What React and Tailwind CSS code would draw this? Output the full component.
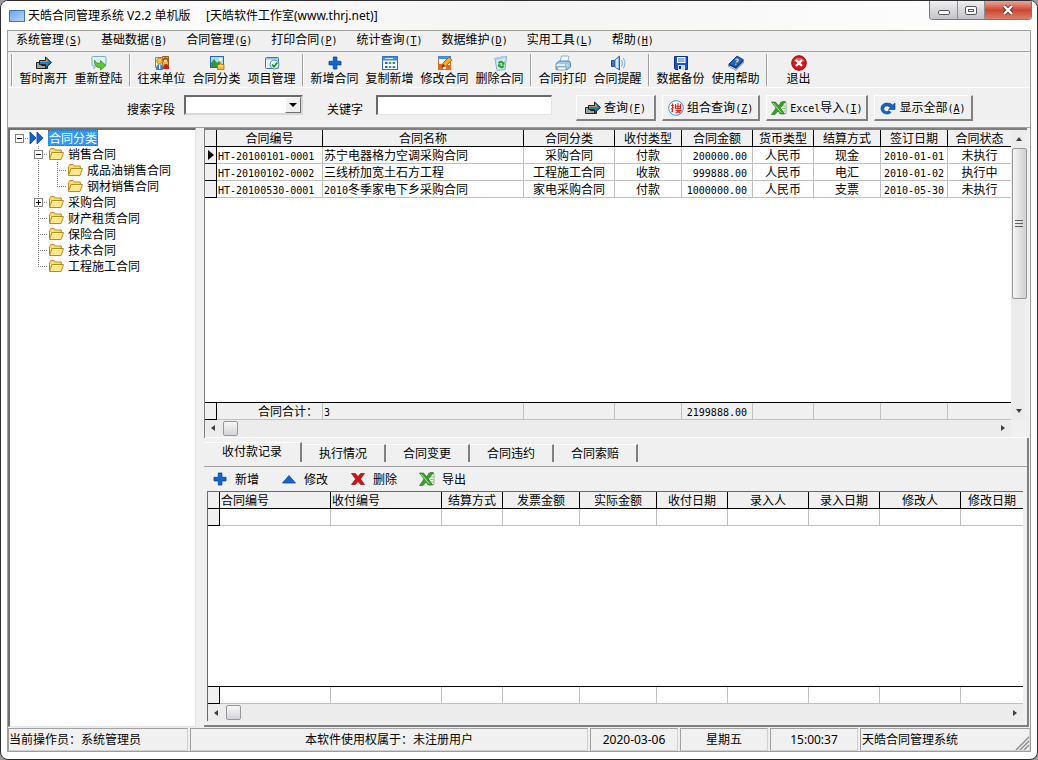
import { useState } from "react";
import clsx from "clsx";

const menus = [
  ["系统管理", "S"],
  ["基础数据", "B"],
  ["合同管理", "G"],
  ["打印合同", "P"],
  ["统计查询", "T"],
  ["数据维护", "D"],
  ["实用工具", "L"],
  ["帮助", "H"],
];

const toolGroups = [
  [["暂时离开", "leave"], ["重新登陆", "login"]],
  [["往来单位", "people"], ["合同分类", "category"], ["项目管理", "project"]],
  [["新增合同", "plus"], ["复制新增", "copy"], ["修改合同", "edit"], ["删除合同", "recycle"]],
  [["合同打印", "printer"], ["合同提醒", "speaker"]],
  [["数据备份", "disk"], ["使用帮助", "book"]],
  [["退出", "exit"]],
];

const tree = [
  { label: "合同分类", guides: ["root-"], icon: "forward" },
  { label: "销售合同", guides: ["blank", "tee-"], icon: "folder" },
  { label: "成品油销售合同", guides: ["blank", "pass", "tee"], icon: "folder" },
  { label: "钢材销售合同", guides: ["blank", "pass", "end"], icon: "folder" },
  { label: "采购合同", guides: ["blank", "tee+"], icon: "folder" },
  { label: "财产租赁合同", guides: ["blank", "tee"], icon: "folder" },
  { label: "保险合同", guides: ["blank", "tee"], icon: "folder" },
  { label: "技术合同", guides: ["blank", "tee"], icon: "folder" },
  { label: "工程施工合同", guides: ["blank", "end"], icon: "folder" },
];

const contractCols = [
  ["合同编号", "w-[106px]"],
  ["合同名称", "w-[201px]"],
  ["合同分类", "w-[91px]"],
  ["收付类型", "w-[67px]"],
  ["合同金额", "w-[71px]"],
  ["货币类型", "w-[61px]"],
  ["结算方式", "w-[67px]"],
  ["签订日期", "w-[67px]"],
  ["合同状态", ""],
];

const contracts = [
  ["HT-20100101-0001", "苏宁电器格力空调采购合同", "采购合同", "付款", "200000.00", "人民币", "现金", "2010-01-01", "未执行"],
  ["HT-20100102-0002", "三线桥加宽土石方工程", "工程施工合同", "收款", "999888.00", "人民币", "电汇", "2010-01-02", "执行中"],
  ["HT-20100530-0001", "2010冬季家电下乡采购合同", "家电采购合同", "付款", "1000000.00", "人民币", "支票", "2010-05-30", "未执行"],
];

const totals = ["合同合计：", "3", "", "", "2199888.00", "", "", "", ""];

const paymentCols = [
  ["合同编号", "w-[111px]"],
  ["收付编号", "w-[111px]"],
  ["结算方式", "w-[61px]"],
  ["发票金额", "w-[77px]"],
  ["实际金额", "w-[77px]"],
  ["收付日期", "w-[71px]"],
  ["录入人", "w-[81px]"],
  ["录入日期", "w-[71px]"],
  ["修改人", "w-[81px]"],
  ["修改日期", ""],
];

const tabs = ["收付款记录", "执行情况", "合同变更", "合同违约", "合同索赔"];

const art = {
  leave: (
    <>
      <path d="M.5 7.500h5v3h6v3H.5z" fill="#a3a39a" stroke="#222" />
      <path d="M3.500 5.500h6V2L15.500 7.500 9.500 13V9.500h-6z" fill="#2378b4" stroke="#222" />
      <path d="M4 6h6V3.500L12.500 6 11 7H4z" fill="#c99356" />
      <path d="M4 7.500h8V9H4z" fill="#1f86c6" />
    </>
  ),
  login: (
    <>
      <path d="M2 1.500h12a1 1 0 0 1 1 1v7a1 1 0 0 1-1 1H6l-3 3v-3H2a1 1 0 0 1-1-1v-7a1 1 0 0 1 1-1z" fill="#e4f1fb" stroke="#7fa9cc" />
      <path d="M3.500 5c1.500 3 3.500 3.500 6 3V5.500l5.500 5L9.500 15v-2.500C5.500 13 3 10 3.500 5z" fill="#5cc834" stroke="#2b8a14" strokeWidth=".7" />
    </>
  ),
  people: (
    <>
      <path d="M8.500 1.500h6v12h-6z" fill="#f3b23c" stroke="#96570e" />
      <circle cx="11.500" cy="5" r="2.500" fill="#8c4413" />
      <circle cx="11.500" cy="6" r="1.800" fill="#fbdfae" />
      <path d="M9 14c0-3 1-5 3-5s3 2 3 5z" fill="#c92020" />
      <path d="M1.500 2.500h7v10h-7z" fill="#fff3cd" stroke="#b47b1b" />
      <circle cx="5.500" cy="6" r="2.800" fill="#f8c24a" stroke="#a86414" strokeWidth=".7" />
      <path d="M2 15c0-4 1-6 3.500-6S9 11 9 15z" fill="#3a7fd4" />
      <path d="M5 9.500h1.300V14H5z" fill="#fff" />
    </>
  ),
  category: (
    <>
      <rect x="1.500" y="1.500" width="13" height="11" fill="#a8dcf9" stroke="#2865b2" />
      <path d="M2 12V8l3-4 3 4 2-2 4 6z" fill="#2d9a35" />
      <circle cx="11.500" cy="4.500" r="1.500" fill="#fff7a5" />
      <path d="M8.500 9.500h2l.6-2 1.400 2h2.500v5H8.500z" fill="#fdb930" stroke="#b66b07" strokeWidth=".8" />
      <path d="M9.500 11h4.500" stroke="#fff2b8" />
    </>
  ),
  project: (
    <>
      <rect x="1.500" y="2.500" width="13" height="11" rx="1" fill="#e8f4ff" stroke="#3779bd" />
      <path d="M2 3h12v1.500H2z" fill="#8dc1ee" />
      <circle cx="10.500" cy="9.500" r="4.500" fill="#eefaf3" stroke="#478fa0" />
      <path d="m8 9.500 2 2.200 3.300-4.200" fill="none" stroke="#16942b" strokeWidth="1.800" />
    </>
  ),
  plus: <path d="M6.300 2h3.600v4.300H14v3.600H9.900V14H6.300V9.900H2V6.300h4.300z" fill="#1267cf" stroke="#0b3f96" strokeWidth=".8" />,
  copy: (
    <>
      <rect x=".5" y="1.500" width="15" height="13" fill="#fff" stroke="#2f6fc4" />
      <path d="M1 2h14v3.500H1z" fill="#3a8ae6" />
      <path d="M3 3.500h8" stroke="#d8ecff" />
      <path d="M3 7h2.500v2H3zM3 11h2.500v2H3z" fill="#2364c4" />
      <path d="M6.800 7h2.500v2H6.800zM6.800 11h2.500v2H6.800z" fill="#3ba43c" />
      <path d="M10.600 7h2.500v2h-2.500zM10.600 11h2.500v2h-2.500z" fill="#2f86a0" />
    </>
  ),
  edit: (
    <>
      <rect x="1.500" y="1.500" width="12" height="13" fill="#fff" stroke="#e06a2c" />
      <path d="M1 1h13v3H1z" fill="#3f8ce2" />
      <path d="M2 9h4v5H2zM9 10h4v4H9z" fill="#ee6228" />
      <path d="m5 12 1-4 6-6 3 3-6 6z" fill="#fca81c" stroke="#9b5608" strokeWidth=".8" />
      <path d="m5 12 1-3 2 2z" fill="#4a2c10" />
    </>
  ),
  recycle: (
    <>
      <path d="M3 3.500 14.500 1.500 13 14.500l-8 1z" fill="#d4e6f5" stroke="#86aecf" />
      <path d="M1 3.500 11 1l4 1-10 3z" fill="#9fcbee" />
      <path d="M6 8c1-3 4.500-3 5.500-.8l1-.7v3.300H9.300l1-1c-.7-1-2-1-2.500.3zM12.500 11c-1 3-4.500 3-5.500.5l-1 .8V9.200h3.200l-1 1c.7 1 2 1 2.500-.2z" fill="#24a33b" />
    </>
  ),
  printer: (
    <>
      <path d="m5 7 1.500-6H13l1 .8L12.500 7z" fill="#f4faff" stroke="#6fa3cf" strokeWidth=".8" />
      <path d="M1 8.500 4 6h10.500l1 2v4l-3 2.500H1z" fill="#9fc5e8" stroke="#47759f" strokeWidth=".8" />
      <path d="M1.500 9h11v2h-11z" fill="#dceeff" />
      <path d="M3 12h8v3H2z" fill="#f8fcff" stroke="#5a8fbf" strokeWidth=".7" />
      <path d="M10 9.500h1.500v1H10z" fill="#2fae35" />
    </>
  ),
  speaker: (
    <>
      <path d="M1.500 5.500h3v6h-3z" fill="#3d75b9" stroke="#254e87" />
      <path d="M4.500 5.500 9.500 1v14l-5-3.500z" fill="#8ec0ee" stroke="#2b62a8" />
      <path d="M7 4v9" stroke="#e7f5ff" strokeWidth="1.500" />
      <path d="M11.300 5c1.500 2 1.500 4.500 0 6.500M13.200 3c2.300 3 2.300 7.500 0 10.500" fill="none" stroke="#88b5e2" strokeWidth="1.200" />
    </>
  ),
  disk: (
    <>
      <path d="M1.500 1.500h13v13h-12l-1-1z" fill="#1857c4" stroke="#0c3285" />
      <path d="M4 2h8.500v6H4z" fill="#fff" />
      <path d="M5 4h6.500M5 6h6.500" stroke="#2b66c4" />
      <path d="M5 10h7v5H5z" fill="#d5dded" />
      <path d="M6 11h2v3H6z" fill="#0c3285" />
    </>
  ),
  book: (
    <>
      <path d="m.5 9 8-7.500L15.500 5v3L8 15.500l-7.500-4z" fill="#0c3f96" />
      <path d="m1.500 10.500 6.500 3.500 7-7v1l-7 7-6.500-3.200z" fill="#f0f4fb" />
      <path d="m1 9 8-8 6.500 3.800L8 12.300z" fill="#1d63c4" stroke="#0a3784" strokeWidth=".8" />
      <path d="M7.500 4.600c1.500-1 3.500 0 2.500 1.200-.6.6-1.700.6-1.700 1.700M7.700 8.700v1" stroke="#ffe14a" strokeWidth="1.400" fill="none" />
    </>
  ),
  exit: (
    <>
      <circle cx="8" cy="8" r="7.300" fill="#d3151c" stroke="#920d10" />
      <path d="M2.500 6C4 1.500 12 1.500 13.500 6c-3 1.500-8 1.500-11 0z" fill="#ec5b58" />
      <path d="m5 5 6 6M11 5l-6 6" stroke="#fff" strokeWidth="2.400" />
    </>
  ),
  search: (
    <>
      <circle cx="8" cy="8" r="7.300" fill="#fff" stroke="#3b8fdc" />
      <path d="M3 5.500h3M4.500 3.500v8l-1.200-.7M3 9l3-1.500M7.500 4v4.500h5V4M10 3v6.500M7.500 6.300h5M7.500 10.500h5l-5 2.800M8.500 10.500l4 2.800" fill="none" stroke="#e2231a" strokeWidth="1.100" />
    </>
  ),
  excel: (
    <>
      <path d="M9 2.500h6v11H8" fill="#f2faf0" stroke="#6eb35f" strokeWidth=".8" />
      <path d="M11 6h3.500M11 8.500h3.500M12 11h2.500" stroke="#86c47b" />
      <path d="M.5 2h4l3 3.500L11 1.500h3.500L9.500 8l4 6H9.500L7 11l-3 3.500H.5L5 8z" fill="#3b9e2f" stroke="#1c6a18" strokeWidth=".6" />
      <path d="m2 3 8.500 10" stroke="#b4e69a" />
    </>
  ),
  refresh: <path d="M8.500 9.500H15V3l-2.200 2.100C9 1.500 1 2.500 1 8.600c0 5 6.500 7.200 10 3.900l-2-2c-2 2-5.200.9-5.200-1.700 0-3 4.200-4 6.400-1.100z" fill="#1763c6" stroke="#0c3d8d" strokeWidth=".6" />,
  folder: (
    <>
      <path d="M1.500 13V4.500l1.300-2H6l1.300 1.500h6v3" fill="#f9dc6e" stroke="#b98a1f" />
      <path d="M1.500 13.500 4 6.500h11.500l-2.500 7z" fill="#ffe98a" stroke="#b98a1f" />
      <path d="M4.800 7.500H14" stroke="#fffbd9" />
    </>
  ),
  forward: <path d="M1 2v12l6-6zM8 2v12l6-6z" fill="#1565cf" stroke="#0b459f" strokeWidth=".8" />,
  triangle: <path d="m1.500 12 6.500-7.500 6.500 7.500z" fill="#1763cc" stroke="#0c469e" strokeWidth=".8" />,
  cross: <path d="M1.500 2.500h3.800L8 5.600l2.700-3.100h3.800L10.300 8l4.200 5.500h-3.800L8 10.400l-2.700 3.100H1.500L5.700 8z" fill="#d31212" stroke="#8f0c0c" strokeWidth=".7" />,
};

const Icon = ({ name }) => (
  <svg viewBox="0 0 16 16" className="size-4 shrink-0" aria-hidden="true">{art[name]}</svg>
);

const Key = ({ k }) => (
  <span className="font-['DejaVu_Sans_Mono',monospace] text-[10px]">(<u>{k}</u>)</span>
);

// latin runs use a half-width face beside the 12px Chinese text
const Mixed = ({ text }) =>
  text.split(/([\x20-\x7e]+)/).map((part, i) =>
    i % 2 ? <span key={i} className="font-['DejaVu_Sans_Mono',monospace] text-[10px]">{part}</span> : part
  );

const Guide = ({ kind }) => {
  const type = kind.replace(/[-+]/, "");
  const box = kind.endsWith("-") || kind.endsWith("+");
  const down = { tee: "M9.500 0v16", pass: "M9.500 0v16", end: "M9.500 0v8" }[type];
  return (
    <svg viewBox="0 0 19 16" className="h-4 w-[19px] shrink-0" shapeRendering="crispEdges" aria-hidden="true">
      {down && <path d={down} stroke="#808080" strokeDasharray="1 1" />}
      {type !== "blank" && type !== "pass" && <path d="M9 8.500h10" stroke="#808080" strokeDasharray="1 1" />}
      {box && <rect x="5.500" y="4.500" width="8" height="8" fill="#fff" stroke="#808080" />}
      {box && <path d="M7 8.500h5" stroke="#000" />}
      {kind.endsWith("+") && <path d="M9.500 6v5" stroke="#000" />}
    </svg>
  );
};

const TitleBar = () => (
  <header className="flex h-[29px] items-start bg-linear-to-r from-white via-[#f4f4f4] to-white pl-2">
    <div className="flex h-[29px] items-center gap-[3px]">
      <span className="h-3 w-4 border border-[#3d76b8] bg-linear-to-br from-[#6ea6ea] to-[#b5d5fa]" />
      <h1 className="whitespace-pre font-['Noto_Sans','Noto_Sans_CJK_SC',sans-serif] text-xs">
        天皓合同管理系统 V2.2 单机版     [天皓软件工作室(www.thrj.net)]
      </h1>
    </div>
    <div className="ml-auto mr-[5px] flex h-[19px] overflow-hidden rounded-b border border-t-0 border-[#77777c]">
      <button aria-label="最小化" className="flex w-7 items-center justify-center border-r border-[#8c8c92] bg-linear-to-b from-[#f0f0f2] via-[#d8d8dc] to-[#c3c3c9]">
        <span className="mt-1 h-[5px] w-3 rounded-xs border border-[#55555c] bg-white" />
      </button>
      <button aria-label="最大化" className="flex w-[27px] items-center justify-center border-r border-[#8c8c92] bg-linear-to-b from-[#f0f0f2] via-[#d8d8dc] to-[#c3c3c9]">
        <span className="flex h-[9px] w-3 items-center justify-center rounded-xs border border-[#55555c] bg-white">
          <span className="h-[3px] w-1.5 border border-[#55555c]" />
        </span>
      </button>
      <button aria-label="关闭" className="flex w-[46px] items-center justify-center bg-linear-to-b from-[#e9a797] via-[#cc4432] to-[#dc8067]">
        <svg viewBox="0 0 12 10" className="h-2.5 w-3">
          <path d="m2 1 8 8M10 1 2 9" stroke="#613636" strokeWidth="4" />
          <path d="m2 1 8 8M10 1 2 9" stroke="#fff" strokeWidth="2.400" />
        </svg>
      </button>
    </div>
  </header>
);

const PushButton = ({ icon, label, k, pad = "px-[5px]" }) => (
  <button className={clsx("flex h-[26px] items-center gap-[3px] border-t border-r-2 border-b-2 border-l border-t-white border-r-[#808080] border-b-[#808080] border-l-white", pad)}>
    <Icon name={icon} />
    <span><Mixed text={label} /><Key k={k} /></span>
  </button>
);

const SearchBar = () => (
  <form className="flex h-10 shrink-0 items-start border-b border-[#a0a0a0] pt-[7px]" onSubmit={(e) => e.preventDefault()}>
    <label htmlFor="field" className="mt-1 ml-[119px] w-[57px] leading-5">搜索字段</label>
    <div className="relative">
      <select id="field" className="block h-5 w-[119px] appearance-none border-2 border-t-[#696969] border-r-[#d8d8d8] border-b-[#d8d8d8] border-l-[#696969] bg-white px-1 text-xs">
        <option></option>
      </select>
      <span className="pointer-events-none absolute top-0.5 right-0.5 flex size-4 items-center justify-center border border-t-white border-r-[#707070] border-b-[#707070] border-l-white bg-[#f0f0f0]">
        <span className="border-x-4 border-t-4 border-x-transparent border-t-black" />
      </span>
    </div>
    <label htmlFor="keyword" className="mt-1 ml-6 w-[49px] leading-5">关键字</label>
    <input id="keyword" className="h-5 w-[176px] border-t-2 border-r border-b border-l-2 border-[#e3e3e3] border-t-[#696969] border-l-[#696969] bg-white px-1" />
    <div className="ml-6 flex gap-1.5">
      <PushButton icon="leave" label="查询" k="F" pad="px-2" />
      <PushButton icon="search" label="组合查询" k="Z" />
      <PushButton icon="excel" label="Excel导入" k="I" pad="px-1" />
      <PushButton icon="refresh" label="显示全部" k="A" />
    </div>
  </form>
);

const ToolBar = () => (
  <div className="flex h-9 shrink-0 items-start border-b border-white">
    {toolGroups.map((group, i) => (
      <div key={i} className="flex">
        <span className="mx-[3px] mt-0.5 h-8 w-0.5 border-r border-l border-[#a0a0a0] border-r-white" />
        {group.map(([label, icon]) => (
          <button key={label} className="flex w-[55px] flex-col items-center pt-[3px]">
            <Icon name={icon} />
            <span className="leading-[14px]">{label}</span>
          </button>
        ))}
      </div>
    ))}
  </div>
);

const Arrow = ({ dir }) => (
  <span
    className={clsx(
      "block size-0 border-transparent",
      dir === "left" && "border-y-[3px] border-r-4 border-r-[#404040]",
      dir === "right" && "border-y-[3px] border-l-4 border-l-[#404040]",
      dir === "up" && "border-x-[3px] border-b-4 border-b-[#404040]",
      dir === "down" && "border-x-[3px] border-t-4 border-t-[#404040]"
    )}
  />
);

const HScroll = () => (
  <div className="flex h-[17px] shrink-0 items-center justify-between bg-[#ececec] px-[6px]">
    <div className="flex items-center gap-2">
      <Arrow dir="left" />
      <span className="size-[15px] rounded-xs border border-[#979797] bg-linear-to-b from-[#f8f8f8] to-[#d4d4d8]" />
    </div>
    <Arrow dir="right" />
  </div>
);

const Cols = ({ cols }) => (
  <colgroup>
    <col className="w-3" />
    {cols.map(([name, w]) => <col key={name} className={w} />)}
  </colgroup>
);

const Indicator = ({ children }) => (
  <td className="border-r border-b border-black bg-[#f0f0f0] p-0">{children}</td>
);

const CellText = ({ text }) => (
  <div className="h-4 overflow-hidden leading-4"><Mixed text={text} /></div>
);

const Grid = ({ cols, rows, left = 0, align = [] }) => (
  <table className="w-full table-fixed border-separate border-spacing-0">
    <Cols cols={cols} />
    <thead>
      <tr className="h-[17px] bg-[#f0f0f0]">
        <th className="border-r border-b border-black p-0" />
        {cols.map(([name], i) => (
          <th key={name} className={clsx("overflow-hidden border-b border-black p-0 leading-4 font-normal whitespace-nowrap", i < cols.length - 1 && "border-r", i < left ? "pl-px text-left" : "text-center")}>
            {name}
          </th>
        ))}
      </tr>
    </thead>
    <tbody>
      {rows.map((row, r) => (
        <tr key={r} className="h-[17px]">
          <Indicator>
            {r === 0 && row[0] && <span className="ml-[3px] block w-0 border-y-[5px] border-l-[6px] border-y-transparent border-l-black" />}
          </Indicator>
          {row.map((cell, i) => (
            <td key={i} className={clsx("overflow-hidden border-b border-[#c0c0c0] p-0 whitespace-nowrap", i < row.length - 1 && "border-r", align[i] ?? "text-center")}>
              <CellText text={cell} />
            </td>
          ))}
        </tr>
      ))}
    </tbody>
  </table>
);

const Footer = ({ cols, cells, tint }) => (
  <table className="w-full shrink-0 table-fixed border-separate border-spacing-0 border-t border-black">
    <Cols cols={cols} />
    <tbody>
      <tr className={clsx("h-[17px]", tint)}>
        <Indicator />
        {cells.map((cell, i) => (
          <td key={i} className={clsx("border-b border-[#c0c0c0] p-0 whitespace-nowrap", i < cells.length - 1 && "border-r", i === 0 ? "pr-1 text-right" : i === 1 ? "pl-px text-left" : "pr-[5px] text-right")}>
            <CellText text={cell} />
          </td>
        ))}
      </tr>
    </tbody>
  </table>
);

const ContractGrid = () => (
  <section className="mr-[3px] flex min-h-0 flex-[15] flex-col border-t-2 border-l border-[#808080]">
    <div className="flex min-h-0 flex-1">
      <div className="flex min-w-0 flex-1 flex-col bg-white">
        <div className="flex-1">
          <Grid cols={contractCols} rows={contracts} align={["pl-px text-left", "pl-px text-left", , , "pr-[5px] text-right"]} />
        </div>
        <Footer cols={contractCols} cells={totals} tint="bg-[#f0f0f0]" />
      </div>
      <div className="flex w-4 flex-col items-center justify-between bg-[#ececec] py-[7px]">
        <div className="flex flex-col items-center gap-[7px]">
          <Arrow dir="up" />
          <span className="flex h-[151px] w-[15px] flex-col items-center justify-center gap-px rounded-xs border border-[#979797] bg-linear-to-r from-[#f6f6f6] to-[#cfcfd2]">
            <span className="h-0.5 w-2 border-t border-[#606060]" />
            <span className="h-0.5 w-2 border-t border-[#606060]" />
            <span className="h-0.5 w-2 border-t border-[#606060]" />
          </span>
        </div>
        <Arrow dir="down" />
      </div>
    </div>
    <div className="h-[18px] border-b border-white pr-4">
      <HScroll />
    </div>
  </section>
);

const PaymentPanel = () => {
  const [active, setActive] = useState(0);
  return (
    <section className="mr-px flex min-h-0 flex-[14] flex-col border-r-2 border-b-2 border-[#808080]">
      <div className="flex h-[29px] items-end border-b border-[#a0a0a0] pb-1">
        {tabs.map((tab, i) => (
          <button
            key={tab}
            onClick={() => setActive(i)}
            className={clsx("border-t border-r-2 border-t-white border-r-[#808080]", i === 0 ? "w-[98px]" : "w-[84px]", i === active ? "h-5 pb-0.5 leading-4" : "h-[18px] leading-4")}
          >
            {tab}
          </button>
        ))}
      </div>
      <div className="flex h-6 items-center pl-2">
        {[["新增", "plus"], ["修改", "triangle"], ["删除", "cross"], ["导出", "excel"]].map(([label, icon]) => (
          <button key={label} className="flex w-[69px] items-center gap-[7px]">
            <Icon name={icon} />
            {label}
          </button>
        ))}
      </div>
      <div className="mr-1 mb-1 ml-[3px] flex min-h-0 flex-1 flex-col border-t border-l border-[#696969] bg-white">
        <div className="flex-1">
          <Grid cols={paymentCols} rows={[paymentCols.map(() => "")]} left={2} />
        </div>
        <Footer cols={paymentCols} cells={paymentCols.map(() => "")} />
        <HScroll />
      </div>
    </section>
  );
};

const ContractTree = () => {
  const [selected, setSelected] = useState("合同分类");
  return (
    <nav className="w-[188px] shrink-0 border-t-2 border-r border-b border-l-2 border-t-[#707070] border-r-[#e3e3e3] border-b-[#e3e3e3] border-l-[#707070] bg-white">
      <ul>
        {tree.map(({ label, guides, icon }) => (
          <li key={label} className="flex h-4 items-center">
            {guides.map((kind, i) => <Guide key={i} kind={kind} />)}
            <button className="flex h-4 items-center gap-[3px]" onClick={() => setSelected(label)}>
              <Icon name={icon} />
              <span className={clsx("h-4 px-px leading-[15px] whitespace-nowrap", selected === label && "bg-[#3397f3] text-white outline outline-dotted -outline-offset-1 outline-[#a05a10]")}>
                {label}
              </span>
            </button>
          </li>
        ))}
      </ul>
    </nav>
  );
};

const StatusCell = ({ className, children }) => (
  <div className={clsx("flex items-center border border-t-[#a0a0a0] border-r-[#d0d0d0] border-b-[#d0d0d0] border-l-[#a0a0a0]", className)}>
    {children}
  </div>
);

const StatusBar = () => (
  <footer className="flex h-6 shrink-0 gap-0.5 pt-px font-['Noto_Sans','Noto_Sans_CJK_SC',sans-serif]">
    <StatusCell className="w-[180px]">当前操作员：系统管理员</StatusCell>
    <StatusCell className="flex-1 justify-center">本软件使用权属于：未注册用户</StatusCell>
    <StatusCell className="w-[88px] justify-center">2020-03-06</StatusCell>
    <StatusCell className="w-[88px] justify-center">星期五</StatusCell>
    <StatusCell className="w-[88px] justify-center">15:00:37</StatusCell>
    <StatusCell className="w-[170px] pl-px">
      天皓合同管理系统
      <svg viewBox="0 0 14 14" className="mt-auto ml-auto size-3.5" aria-hidden="true">
        <path d="M1 14 14 1M5 14l9-9M9 14l5-5" stroke="#909090" strokeWidth="1.500" />
      </svg>
    </StatusCell>
  </footer>
);

export default function App() {
  return (
    <div className="h-screen bg-[#9a9a9a] font-['Noto_Sans_CJK_SC',sans-serif] text-xs text-black">
      <div className="flex h-full flex-col overflow-hidden rounded-lg border border-[#2e2e30] bg-white">
        <TitleBar />
        <div className="mx-1.5 mb-[7px] flex min-h-0 flex-1 flex-col border border-[#9aa095] bg-[#f0f0f0]">
          <nav className="flex h-[21px] shrink-0 items-center gap-[19px] border-b border-[#a0a0a0] pb-0.5 pl-2">
            {menus.map(([label, k]) => (
              <button key={label} className="leading-4 whitespace-nowrap">{label}<Key k={k} /></button>
            ))}
          </nav>
          <ToolBar />
          <SearchBar />
          <main className="flex min-h-0 flex-1 gap-2">
            <ContractTree />
            <div className="flex min-w-0 flex-1 flex-col">
              <ContractGrid />
              <PaymentPanel />
            </div>
          </main>
          <StatusBar />
        </div>
      </div>
    </div>
  );
}
